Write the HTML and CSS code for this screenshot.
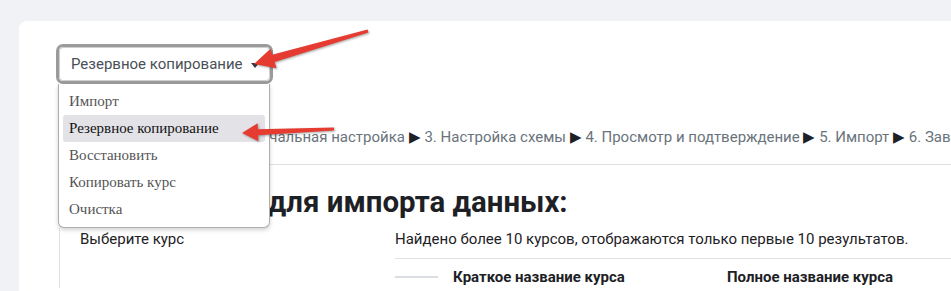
FILE: index.html
```html
<!DOCTYPE html>
<html lang="ru">
<head>
<meta charset="utf-8">
<title>Импорт</title>
<link rel="stylesheet" href="styles.css">
</head>
<body>
<div class="page">
  <div class="card">
    <div class="select">
      <span class="select-text">Резервное копирование</span>
      <span class="caret"></span>
    </div>
    <div class="crumbs">1. Выбор курса <span class="sep">▶</span> 2. Первоначальная настройка <span class="sep">▶</span> 3. Настройка схемы <span class="sep">▶</span> 4. Просмотр и подтверждение <span class="sep">▶</span> 5. Импорт <span class="sep">▶</span> 6. Завершение</div>
    <div class="rule"></div>
    <h2 class="title">Найдите курс для импорта данных:</h2>
    <div class="form-row">
      <div class="label">Выберите курс</div>
      <div class="field">
        <div class="note">Найдено более 10 курсов, отображаются только первые 10 результатов.</div>
        <div class="thead">
          <div class="c1"><span class="bar"></span></div>
          <div class="c2">Краткое название курса</div>
          <div class="c3">Полное название курса</div>
        </div>
      </div>
    </div>
    <ul class="menu">
      <li class="item">Импорт</li>
      <li class="item active">Резервное копирование</li>
      <li class="item">Восстановить</li>
      <li class="item">Копировать курс</li>
      <li class="item">Очистка</li>
    </ul>
  </div>
  <svg class="arrows" width="951" height="291" viewBox="0 0 951 291">
    <polygon points="254,64 276.5,68.3 274.6,61.9 368.4,32.4 367.6,29.6 272.1,54.7 270.5,48.7"/>
    <polygon points="242,133 258.4,141.3 258.1,135.3 334.1,130.5 333.9,127.5 257.9,129.3 257.6,123.3"/>
  </svg>
</div>
</body>
</html>
```
FILE: styles.css
```css
html, body {
  margin: 0;
  padding: 0;
  overflow: hidden;
}
body {
  background: #f1f2f6;
  font-family: Roboto, "Liberation Sans", sans-serif;
  font-size: 15px;
  color: #1d2125;
  width: 951px;
  height: 291px;
}
.page {
  position: relative;
  padding: 21px 0 0 19px;
}
.card {
  position: relative;
  background: #fff;
  border-top-left-radius: 8px;
  padding: 26px 0 0 40px;
  height: 400px;
  overflow: hidden;
}
.select {
  box-sizing: border-box;
  width: 211px;
  height: 34px;
  border: 1px solid #cfcfcf;
  border-radius: 4px;
  outline: 3px solid #9b9b9b;
  display: flex;
  align-items: center;
  padding: 0 11px;
  color: #495057;
  font-size: 15px;
}
.select-text {
  flex: 1;
  white-space: nowrap;
}
.caret {
  width: 0;
  height: 0;
  border-left: 4px solid transparent;
  border-right: 4px solid transparent;
  border-top: 5px solid #343a40;
  margin-right: -1px;
  margin-top: 2px;
}
.crumbs {
  margin-top: 45px;
  padding-left: 8px;
  line-height: 22px;
  white-space: nowrap;
  color: #6a737b;
  font-size: 15px;
}
.sep {
  color: #1d2125;
}
.rule {
  margin-top: 16px;
  height: 1px;
  background: #dee2e6;
}
.title {
  margin: 20px 0 0 0;
  text-indent: 13px;
  font-size: 29.4px;
  line-height: 35px;
  font-weight: 700;
  white-space: nowrap;
  color: #1d2125;
}
.form-row {
  margin-top: 8px;
  display: flex;
  border-left: 1px solid #dee2e6;
}
.label {
  box-sizing: border-box;
  width: 335px;
  padding-left: 20px;
  line-height: 22.5px;
  flex: none;
}
.field {
  flex: 1;
}
.note {
  line-height: 22.5px;
  padding-bottom: 7px;
  border-bottom: 1px solid #dee2e6;
  white-space: nowrap;
}
.thead {
  display: flex;
  align-items: center;
  margin-top: 7px;
  font-weight: 700;
  line-height: 22.5px;
  white-space: nowrap;
}
.c1 {
  width: 58px;
  flex: none;
  display: flex;
  align-items: center;
}
.bar {
  width: 43px;
  height: 2px;
  background: #dadde1;
}
.c2 {
  width: 274px;
  flex: none;
}
.menu {
  position: absolute;
  left: 39px;
  top: 63px;
  box-sizing: border-box;
  width: 212px;
  margin: 0;
  padding: 4px;
  list-style: none;
  background: #fff;
  border: 1px solid #aeaeae;
  border-top: none;
  border-radius: 0 0 6px 6px;
  box-shadow: 0 2px 4px rgba(0, 0, 0, 0.18);
  font-family: "Liberation Serif", "Times New Roman", serif;
  font-size: 15px;
  color: #555;
}
.item {
  height: 27px;
  line-height: 27px;
  padding-left: 6px;
  border-radius: 3px;
  white-space: nowrap;
}
.item.active {
  background: #e2e2e7;
  color: #111;
}
.arrows {
  position: absolute;
  left: 0;
  top: 0;
  pointer-events: none;
  fill: #e53b30;
  filter: drop-shadow(1px 1px 1px rgba(0, 0, 0, 0.35));
}
```
